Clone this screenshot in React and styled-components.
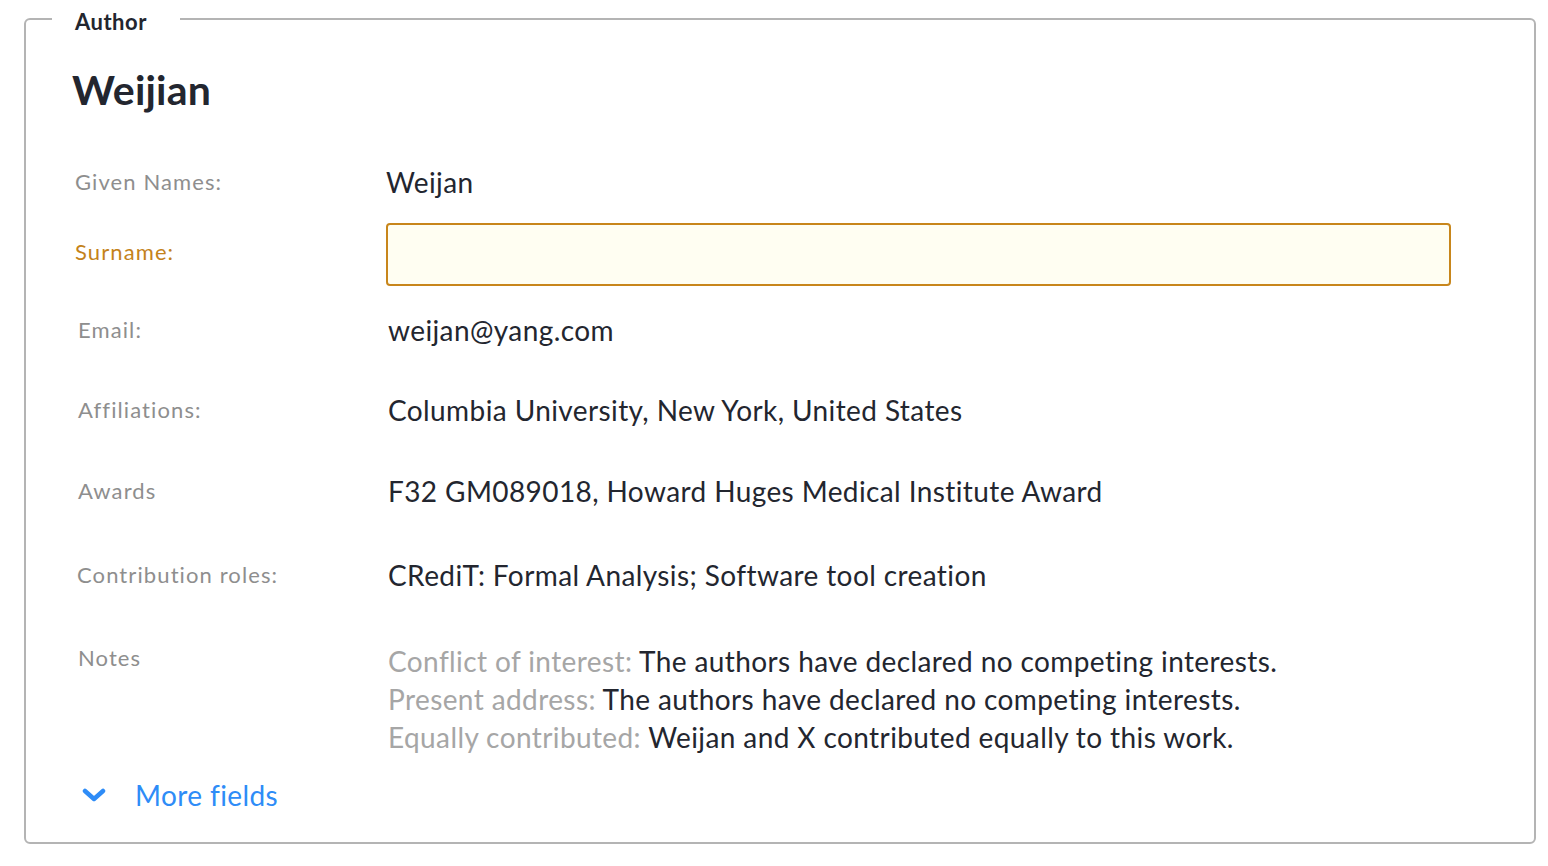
import React from "react";
import styled, { createGlobalStyle } from "styled-components";

const Global = createGlobalStyle`
  html, body { margin: 0; padding: 0; background: #ffffff; }
  body { font-family: Lato, "Noto Sans", "Liberation Sans", sans-serif; color: #23262f; }
  * { box-sizing: border-box; }
`;

const Frame = styled.fieldset`
  margin: 4px 0 0 24px;
  width: 1512px;
  height: 840px;
  padding: 0 0 0 46px;
  border: 2px solid #b4b4b4;
  border-radius: 6px;
  min-width: 0;
`;

const Legend = styled.legend`
  margin-left: -20px;
  padding: 6px 33px 0 23px;
  font-size: 22px;
  line-height: 24px;
  font-weight: 700;
  letter-spacing: 0.5px;
  color: #23262f;
`;

const Title = styled.h1`
  margin: 34px 0 0 0;
  font-size: 41px;
  line-height: 44px;
  font-weight: 700;
  letter-spacing: 0.2px;
  color: #23262f;
`;

const Rows = styled.div`
  margin-top: 35px;
  display: flex;
  flex-direction: column;
`;

const Row = styled.div`
  display: grid;
  grid-template-columns: ${p => p.$col}px 1fr;
  align-items: ${p => (p.$top ? "start" : "center")};
  height: ${p => p.$h}px;
  padding-left: ${p => p.$shift}px;
`;

const Label = styled.div`
  font-size: 22px;
  line-height: 28px;
  letter-spacing: 1.1px;
  color: ${p => (p.$warn ? "#c4821a" : "#8e8e8e")};
  padding-top: ${p => (p.$top ? "27px" : "0")};
  margin-bottom: ${p => (p.$warn ? "5px" : "0")};
`;

const Value = styled.div`
  font-size: 28px;
  line-height: 34px;
  letter-spacing: 0.4px;
  color: #23262f;
`;

const Input = styled.input`
  width: 1065px;
  height: 63px;
  border: 2px solid #c8861b;
  border-radius: 4px;
  background: #fffef2;
  outline: none;
  font: inherit;
  font-size: 28px;
  padding: 0 14px;
`;

const Notes = styled.div`
  padding-top: 25px;
  font-size: 28px;
  line-height: 38px;
  letter-spacing: 0.4px;
  color: #23262f;
`;

const NoteKey = styled.span`
  color: #a6a6a6;
`;

const More = styled.button`
  display: flex;
  align-items: center;
  gap: 29px;
  margin: 27px 0 0 10px;
  padding: 0;
  border: none;
  background: none;
  font-family: inherit;
  font-size: 28px;
  line-height: 34px;
  letter-spacing: 0.4px;
  color: #2e8cf7;
  cursor: pointer;
`;

const rows = [
  { label: "Given Names:", value: "Weijan", h: 70, shift: 3, col: 311 },
  { label: "Surname:", input: true, h: 74, shift: 3, col: 311, warn: true },
  { label: "Email:", value: "weijan@yang.com", h: 78, shift: 6, col: 310 },
  { label: "Affiliations:", value: "Columbia University, New York, United States", h: 81, shift: 6, col: 310 },
  { label: "Awards", value: "F32 GM089018, Howard Huges Medical Institute Award", h: 82, shift: 6, col: 310 },
  { label: "Contribution roles:", value: "CRediT: Formal Analysis; Software tool creation", h: 85, shift: 5, col: 311 },
];

const notes = [
  ["Conflict of interest:", "The authors have declared no competing interests."],
  ["Present address:", "The authors have declared no competing interests."],
  ["Equally contributed:", "Weijan and X contributed equally to this work."],
];

export default function App() {
  return (
    <>
      <Global />
      <Frame>
        <Legend>Author</Legend>
        <Title>Weijian</Title>
        <Rows>
          {rows.map(r => (
            <Row key={r.label} $h={r.h} $shift={r.shift} $col={r.col}>
              <Label $warn={r.warn}>{r.label}</Label>
              {r.input ? <Input type="text" /> : <Value>{r.value}</Value>}
            </Row>
          ))}
          <Row $h={134} $shift={6} $col={310} $top>
            <Label $top>Notes</Label>
            <Notes>
              {notes.map(([k, v]) => (
                <div key={k}>
                  <NoteKey>{k}</NoteKey> {v}
                </div>
              ))}
            </Notes>
          </Row>
        </Rows>
        <More>
          <svg width="24" height="16" viewBox="0 0 24 16">
            <polyline points="3,4 12,12 21,4" fill="none" stroke="#2e8cf7" strokeWidth="4.5" strokeLinecap="round" strokeLinejoin="round" />
          </svg>
          More fields
        </More>
      </Frame>
    </>
  );
}
